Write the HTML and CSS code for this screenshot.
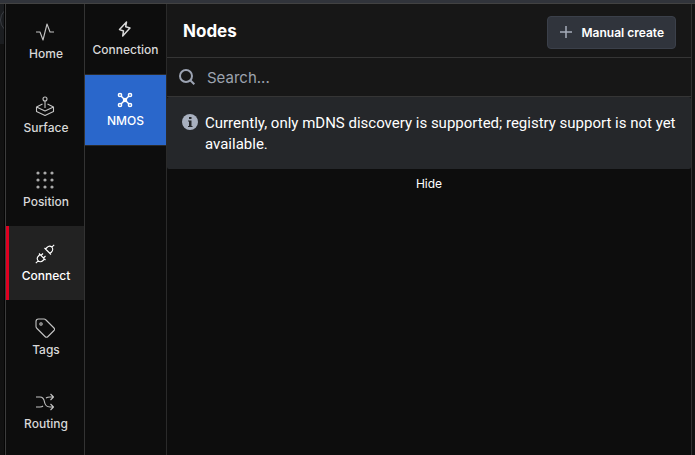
FILE: index.html
```
<!DOCTYPE html>
<html lang="en">
<head>
<meta charset="utf-8">
<title>Nodes</title>
<link rel="stylesheet" href="styles.css">
</head>
<body>
<div class="topbar"></div>
<div class="shell">
  <div class="gutter"><div class="gutter-head"><span class="knob"></span></div></div>
  <nav class="main-nav" aria-label="Main">
    <a class="item" href="#home">
      <svg class="icon" viewBox="0 0 20 20"><path d="M1 10h4l3 8L12 2l3 8h4"/></svg>
      Home</a>
    <a class="item" href="#surface">
      <svg class="icon" viewBox="0 0 20 20"><circle cx="10" cy="3" r="2"/><path d="M10 5v7M7.500 8 1.500 11l8.500 4 8.500-4-6-3M1.500 11v4.500l8.500 4 8.500-4V11"/></svg>
      Surface</a>
    <a class="item" href="#position">
      <svg class="icon dots" viewBox="0 0 20 20"><circle cx="3" cy="3" r="1.600"/><circle cx="10" cy="3" r="1.600"/><circle cx="17" cy="3" r="1.600"/><circle cx="3" cy="10" r="1.600"/><circle cx="10" cy="10" r="1.600"/><circle cx="17" cy="10" r="1.600"/><circle cx="3" cy="17" r="1.600"/><circle cx="10" cy="17" r="1.600"/><circle cx="17" cy="17" r="1.600"/></svg>
      Position</a>
    <a class="item active" href="#connect" aria-current="page">
      <svg class="icon" viewBox="0 0 20 20"><path d="M.8 19.200l2.400-2.400M19.200.8l-2.400 2.400M4 9.500l6.500 6.500M5 10.500l-1.500 1.500c-1.500 1.500-1.500 3.500-.3 4.800s3.300 1.200 4.800-.3L9.500 15M6 11.500l2-2M8.500 14l2-2M9.500 4l6.500 6.500M10.500 5l1.500-1.500c1.500-1.500 3.500-1.500 4.800-.3s1.200 3.300-.3 4.800L15 9.500"/></svg>
      Connect</a>
    <a class="item" href="#tags">
      <svg class="icon" viewBox="0 0 20 20"><path d="M1 3.500Q1 1 3.500 1H9q1 0 2 1l8 8q1.200 1.200 0 2.500l-6 6q-1.500 1.500-3 0l-8-8q-1-1-1-2z"/><circle cx="6" cy="6" r="1.200"/></svg>
      Tags</a>
    <a class="item" href="#routing">
      <svg class="icon" viewBox="0 0 20 20"><path d="M1 5h4c3 0 4 2 4.500 5S12 15 15 15h3M1 15h4q2 0 3-1M11 6q1.500-1 4-1h3M15.500 2l3 3-3 3M15.500 12l3 3-3 3"/></svg>
      Routing</a>
  </nav>
  <nav class="sub-nav" aria-label="Connect">
    <a class="sub-item" href="#connection">
      <svg class="sub-icon" viewBox="0 0 16 16"><path d="M9.500 1 2.500 8.500l4 1.500-.8 5 7.300-8-4.300-1.300z"/></svg>
      Connection</a>
    <a class="sub-item selected" href="#nmos" aria-current="page">
      <svg class="sub-icon" viewBox="0 0 16 16"><path d="M4 4l8 8M12 4l-8 8"/><circle class="hub" cx="8" cy="8" r="1.500"/><circle cx="3" cy="3" r="1.600"/><circle cx="13" cy="3" r="1.600"/><circle cx="3" cy="13" r="1.600"/><circle cx="13" cy="13" r="1.600"/></svg>
      NMOS</a>
  </nav>
  <main class="content">
    <header class="head">
      <h1>Nodes</h1>
      <button class="create" type="button"><svg class="plus" viewBox="0 0 12 12"><path d="M6 0v12M0 6h12"/></svg>Manual create</button>
    </header>
    <label class="search">
      <svg class="glass" viewBox="0 0 16 16"><circle cx="7" cy="7" r="6"/><path d="M11.300 11.300l4 4"/></svg>
      <input type="search" placeholder="Search..." aria-label="Search">
    </label>
    <div class="notice">
      <svg class="info" viewBox="0 0 16 16"><circle cx="8" cy="8" r="8"/><path d="M7 3h2.500v2H7zM6 6.500h3.500V12h1v1H6v-1h1V7.500H6z"/></svg>
      <p>Currently, only mDNS discovery is supported; registry support is not yet available.</p>
    </div>
    <button class="hide" type="button">Hide</button>
  </main>
  <div class="edge"></div>
</div>
</body>
</html>
```
FILE: styles.css
```
* { box-sizing: border-box; }
body {
  margin: 0;
  min-height: 100vh;
  display: flex;
  flex-direction: column;
  background: #0d0d0d;
  color: #fff;
  font-family: Inter, "Liberation Sans", sans-serif;
  font-size: 12px;
}
a { color: inherit; text-decoration: none; }
button { font: inherit; color: inherit; cursor: pointer; }
svg { fill: none; stroke: currentColor; flex: none; }
.topbar { height: 4px; background: #31343b; border-bottom: 1px solid #424242; }
.shell { flex: 1; display: flex; }
.gutter { width: 5px; background: #111; border-right: 1px solid #050505; }
.gutter-head { height: 40px; background: #1b1d20; overflow: hidden; padding-top: 3px; }
.knob { display: block; width: 26px; height: 26px; border: 1px solid #3a3d42; border-radius: 50%; }
.main-nav { width: 80px; border-left: 1px solid #3c3c3c; border-right: 1px solid #333; color: #d8d8d8; font-weight: 500; }
.item {
  height: 74px;
  display: flex;
  flex-direction: column;
  align-items: center;
  justify-content: center;
  gap: 4px;
  line-height: 16px;
  padding: 1px 0 0 2px;
}
.icon { width: 20px; height: 20px; margin-right: 2px; stroke: #c4c4c4; stroke-width: 1.1; stroke-linejoin: round; }
.dots { fill: #aaa; stroke: none; }
.active { background: #222; color: #fff; box-shadow: inset 3px 0 #dc0020; }
.active .icon { stroke: #fff; }
.sub-nav { width: 82px; border-right: 1px solid #2a2a2a; color: #d8d8d8; font-weight: 500; }
.sub-item {
  height: 71px;
  display: flex;
  flex-direction: column;
  align-items: center;
  justify-content: center;
  gap: 5px;
  line-height: 16px;
  border-bottom: 1px solid #2a2a2a;
}
.sub-icon { width: 16px; height: 16px; margin-right: 1px; stroke-width: 1.5; stroke-linejoin: round; }
.hub { fill: currentColor; }
.selected { background: #2a67cb; color: #fff; }
.content { flex: 1; min-width: 0; display: flex; flex-direction: column; }
.head {
  height: 54px;
  display: flex;
  align-items: center;
  justify-content: space-between;
  padding: 3px 15px 0 16px;
  background: #171717;
  border-bottom: 1px solid #353535;
}
h1 { margin: 0 0 3px; font-size: 17px; font-weight: 700; }
.create {
  height: 33px;
  display: flex;
  align-items: center;
  gap: 9px;
  padding: 0 11px 0 12px;
  background: #30343c;
  border: 1px solid #3b404a;
  border-radius: 4px;
  font-weight: 600;
}
.plus { width: 12px; height: 12px; stroke: #a5acb9; stroke-width: 1.5; }
.search {
  height: 39px;
  display: flex;
  align-items: center;
  gap: 12px;
  padding: 0 12px;
  background: #171717;
  border-bottom: 1px solid #353535;
}
.glass { width: 16px; height: 16px; stroke: #9ca3b2; stroke-width: 2; }
input { flex: 1; min-width: 0; padding: 0; border: 0; outline: 0; background: none; color: #fff; font: inherit; font-size: 15px; }
input::placeholder { color: #9ca3af; opacity: 1; }
.notice {
  display: flex;
  gap: 7px;
  padding: 16px 8px 14px 15px;
  background: #25272a;
  border-radius: 2px;
}
.info { width: 16px; height: 16px; margin-top: 1px; fill: #a8b0bf; stroke: none; }
.info path { fill: #25272a; }
p { margin: 0; font-family: Roboto, "Liberation Sans", sans-serif; font-size: 15px; line-height: 21px; }
.hide { align-self: center; margin-top: 7px; padding: 0; border: 0; background: none; line-height: 16px; }
.edge { width: 4px; background: #121212; border-left: 1px solid #303030; }
```
